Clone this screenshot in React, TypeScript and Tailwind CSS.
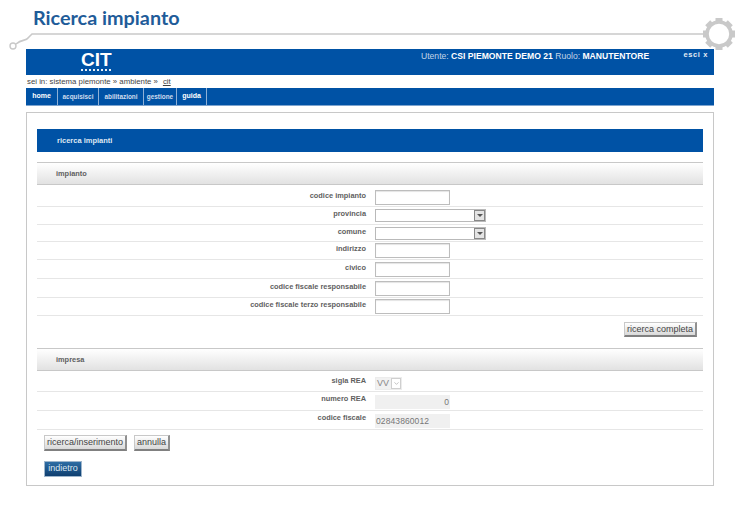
import { ChevronDown } from 'lucide-react';

const navItems = [
  { label: 'home', width: 'w-[32px]', active: true },
  { label: 'acquisisci', width: 'w-[41px]' },
  { label: 'abilitazioni', width: 'w-[45px]' },
  { label: 'gestione', width: 'w-[33px]' },
  { label: 'guida', width: 'w-[30px]', active: true },
];

const impiantoRows = [
  { label: 'codice impianto', height: 'h-[22px] pt-[3px]' },
  { label: 'provincia', select: true, height: 'h-[18px]' },
  { label: 'comune', select: true, height: 'h-[17px]' },
  { label: 'indirizzo', height: 'h-[18px]' },
  { label: 'civico', height: 'h-[19px]' },
  { label: 'codice fiscale responsabile', height: 'h-[19px]' },
  { label: 'codice fiscale terzo responsabile', height: 'h-[18px]' },
];

const Gear = () => {
  const teeth = [0, 45, 90, 135, 180, 225, 270, 315];
  return (
    <svg width="36" height="36" viewBox="0 0 36 36" className="absolute left-[701px] top-[16px]">
      {teeth.map((a) => (
        <rect key={a} x="14.5" y="2" width="7" height="6" fill="#c9c9c9" transform={`rotate(${a} 18 18)`} />
      ))}
      <circle cx="18" cy="18" r="12" fill="#fff" stroke="#c9c9c9" strokeWidth="3.6" />
    </svg>
  );
};

const Row = ({
  label,
  height,
  labelShift = '-mt-[3px]',
  children,
}: {
  label: string;
  height: string;
  labelShift?: string;
  children: React.ReactNode;
}) => (
  <div className={`flex items-center border-b border-[#e6e6e6] ${height}`}>
    <span className={`w-[329px] text-right text-[7.4px] font-bold leading-none text-[#5f5f5f] ${labelShift}`}>{label}</span>
    <div className="ml-[9px] flex">{children}</div>
  </div>
);

const TextBox = () => (
  <div className="h-[15px] w-[75px] border border-[#bdbdbd] bg-white shadow-[inset_0_1px_1px_#e4e4e4]" />
);

const SelectBox = () => (
  <div className="flex h-[13px] w-[111px] border border-[#b9b9b9] bg-white">
    <div className="flex-1" />
    <div className="flex w-[11px] items-center justify-center border border-[#888] bg-[#e4e4e4]">
      <div className="h-0 w-0 border-x-[3px] border-t-[3px] border-x-transparent border-t-[#555]" />
    </div>
  </div>
);

const SectionHeader = ({ title }: { title: string }) => (
  <div className="flex h-[23px] items-center border-y border-[#c8c8c8] bg-gradient-to-b from-white to-[#e2e2e2] pl-[19px] text-[7.4px] font-bold text-[#5f5f5f]">
    {title}
  </div>
);

const Btn = ({ children, className }: { children: React.ReactNode; className: string }) => (
  <button className={`flex items-center justify-center whitespace-nowrap border border-b-2 border-r-2 border-[#c8c8c8] border-b-[#808080] border-r-[#909090] bg-gradient-to-b from-white to-[#d9d9d9] text-[9px] leading-none text-[#444] ${className}`}>
    {children}
  </button>
);

export default function App() {
  return (
    <div className="relative h-[522px] w-[741px] overflow-hidden bg-white font-['Liberation_Sans',sans-serif]">
      {/* title */}
      <h1 className="pl-[33px] pt-[5px] font-['Lato',sans-serif] text-[19.8px] font-bold leading-[24px] text-[#1f5c99]">
        Ricerca impianto
      </h1>

      {/* decorative line with the ring at the left */}
      <svg width="710" height="24" viewBox="0 0 710 24" className="absolute left-0 top-[30px]" fill="none" stroke="#c9c9c9">
        <path d="M16 14 C22 9 26 11 28 8 L32 4 L706 4" strokeWidth="1.6" />
        <circle cx="13" cy="16" r="3" strokeWidth="1.4" />
      </svg>

      <div className="ml-[26px] mt-[20px] w-[688px]">
        {/* blue header */}
        <div className="flex h-[26px] bg-[#0052a5] text-white">
          <div className="w-[55px]" />
          <div className="w-[30px] pt-[3px] text-center">
            <div className="text-[19px] font-bold leading-[15px]">CIT</div>
            <div className="mt-[2px] border-t-2 border-dotted border-white/90" />
          </div>
          <div className="ml-[310px] pt-[2px] text-[8.6px] leading-[10px] text-[#c3d4e8]">
            Utente: <b className="text-white">CSI PIEMONTE DEMO 21</b> Ruolo: <b className="text-white">MANUTENTORE</b>
          </div>
          <div className="ml-auto pr-[6px] pt-[1px] text-[7.5px] font-bold leading-[10px] tracking-[0.6px] text-[#e4ecf5]">esci x</div>
        </div>

        {/* breadcrumb */}
        <div className="flex h-[13px] items-center text-[7.8px] text-[#444]">
          <span className="pl-[1px]">sei in: sistema piemonte » ambiente »</span>
          <span className="ml-[5px] underline">cit</span>
        </div>

        {/* nav */}
        <div className="flex h-[18px] border-b border-[#7da4cf] bg-[#0052a5]">
          {navItems.map((n) => (
            <div
              key={n.label}
              className={`flex items-center justify-center border-r border-[#8fb0d6] font-bold ${n.width} ${n.active ? 'text-[7px] text-white' : 'text-[6.4px] text-[#cfddee]'}`}
            >
              {n.label}
            </div>
          ))}
        </div>

        {/* content box */}
        <div className="mt-[6px] h-[374px] border border-[#c8c8c8] px-[10px] pt-[16px]">
          <div className="flex h-[23px] items-center bg-[#0052a5] pl-[20px] text-[7.5px] font-bold text-[#dfe8f3]">
            ricerca impianti
          </div>

          <div className="mt-[10px]">
            <SectionHeader title="impianto" />
            {impiantoRows.map((r) => (
              <Row key={r.label} label={r.label} height={r.height}>
                {r.select ? <SelectBox /> : <TextBox />}
              </Row>
            ))}
          </div>

          <div className="mr-[6px] mt-[6px] flex justify-end">
            <Btn className="h-[15px] w-[73px]">ricerca completa</Btn>
          </div>

          <div className="mt-[11px]">
            <SectionHeader title="impresa" />
            <Row label="sigla REA" height="h-[21px] pt-[5px]" labelShift="-mt-[6px]">
              <div className="flex h-[13px] w-[27px] items-center border border-[#ececec] bg-[#f1f1f1] pl-[1px] text-[9px] text-[#888]">
                VV
                <div className="ml-auto flex h-[11px] w-[10px] items-center justify-center border border-[#cfcfcf] bg-white">
                  <ChevronDown className="h-[7px] w-[7px] text-[#999]" />
                </div>
              </div>
            </Row>
            <Row label="numero REA" height="h-[19px] pt-[2px]" labelShift="-mt-[6px]">
              <div className="flex h-[14px] w-[75px] items-center justify-end bg-[#f0f0f0] pr-[1px] text-[8.5px] text-[#777]">0</div>
            </Row>
            <Row label="codice fiscale" height="h-[19px] pt-[2px]" labelShift="-mt-[6px]">
              <div className="flex h-[14px] w-[75px] items-center bg-[#f0f0f0] pl-[1px] text-[8.5px] tracking-[0.1px] text-[#777]">02843860012</div>
            </Row>
          </div>

          <div className="ml-[7px] mt-[5px] flex gap-[7px]">
            <Btn className="h-[16px] w-[83px]">ricerca/inserimento</Btn>
            <Btn className="h-[16px] w-[36px]">annulla</Btn>
          </div>

          <button className="ml-[7px] mt-[10px] flex h-[16px] w-[38px] items-center justify-center border border-[#9fb6cc] bg-gradient-to-b from-[#2e6da4] to-[#0f3f70] text-[9px] text-[#dce8f4]">
            indietro
          </button>
        </div>
      </div>

      <Gear />
    </div>
  );
}
